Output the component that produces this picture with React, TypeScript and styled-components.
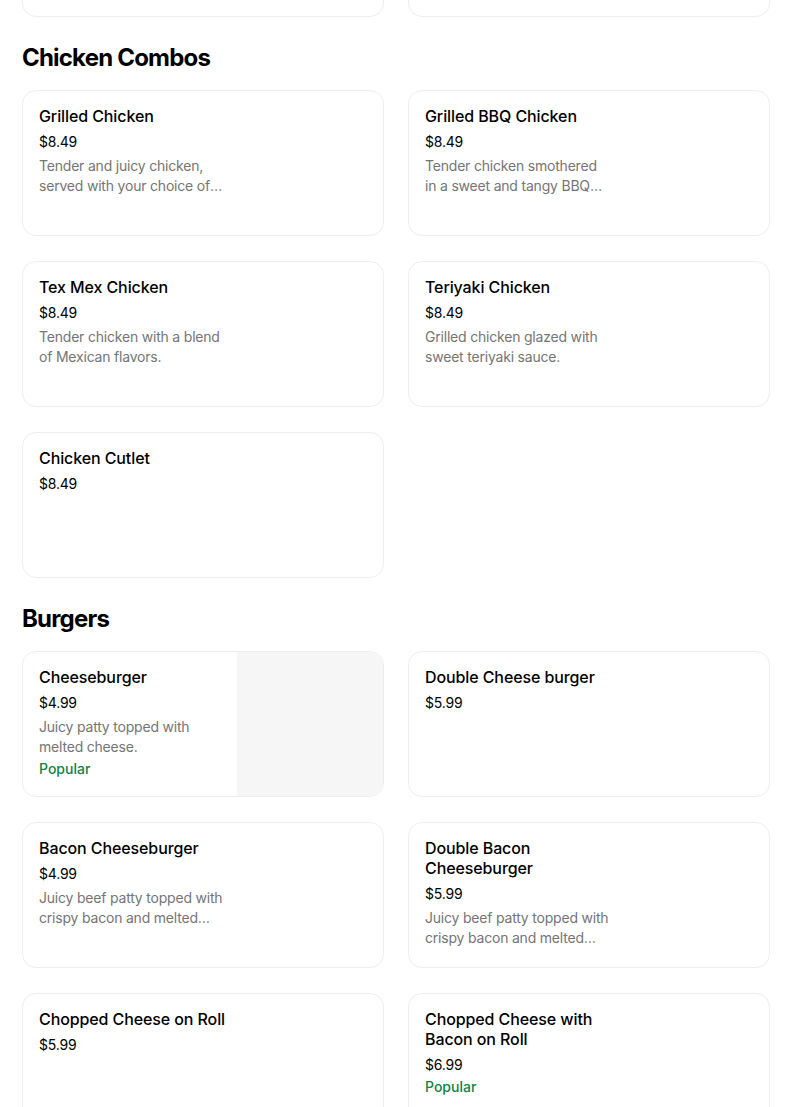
import React from "react";
import styled, { createGlobalStyle } from "styled-components";

const Global = createGlobalStyle`
  html, body { margin: 0; padding: 0; background: #fff; }
  body { font-family: Inter, "Noto Sans", sans-serif; color: #000; overflow: hidden; }
`;

const Page = styled.div`
  padding: 0 33px 0 22px;
  display: flex;
  flex-direction: column;
`;

const Grid = styled.div<{ $cut?: boolean }>`
  display: grid;
  grid-template-columns: 362px 362px;
  column-gap: 24px;
  row-gap: 25px;
  ${(p) => (p.$cut ? "margin-top: -129px;" : "")}
`;

const SectionTitle = styled.h2`
  margin: 25px 0 16px;
  font-family: Inter, "Noto Sans", sans-serif;
  font-weight: 700;
  font-size: 24px;
  line-height: 32px;
  letter-spacing: -0.8px;
  color: #000;
`;

const Card = styled.div`
  box-sizing: border-box;
  height: 146px;
  border: 1px solid #eeeeee;
  border-radius: 14px;
  display: flex;
  overflow: hidden;
  background: #fff;
`;

const Info = styled.div`
  flex: 1;
  padding: 15px 16px;
  min-width: 0;
  display: flex;
  flex-direction: column;
`;

const Name = styled.div`
  font-size: 16px;
  line-height: 20px;
  font-weight: 500;
  color: #000;
  max-width: 195px;
  letter-spacing: -0.1px;
`;

const Price = styled.div`
  margin-top: 6px;
  font-size: 14px;
  line-height: 20px;
  color: #000;
  letter-spacing: -0.2px;
`;

const Desc = styled.div`
  margin-top: 4px;
  font-size: 14px;
  line-height: 20px;
  color: #757575;
  max-width: 186px;
  letter-spacing: -0.2px;
  display: -webkit-box;
  -webkit-line-clamp: 2;
  -webkit-box-orient: vertical;
  overflow: hidden;
`;

const Tag = styled.div`
  margin-top: 2px;
  font-size: 14px;
  line-height: 20px;
  font-weight: 500;
  color: #0e8345;
`;

const Thumb = styled.div`
  width: 146px;
  flex: none;
  background: #f6f6f6;
`;

type Item = { name?: string; price?: string; desc?: string; popular?: boolean; image?: boolean };

const ItemCard = ({ item }: { item: Item }) => (
  <Card>
    <Info>
      {item.name && <Name>{item.name}</Name>}
      {item.price && <Price>{item.price}</Price>}
      {item.desc && <Desc>{item.desc}</Desc>}
      {item.popular && <Tag>Popular</Tag>}
    </Info>
    {item.image && <Thumb />}
  </Card>
);

const chicken: Item[] = [
  { name: "Grilled Chicken", price: "$8.49", desc: "Tender and juicy chicken, served with your choice of sides and sauce." },
  { name: "Grilled BBQ Chicken", price: "$8.49", desc: "Tender chicken smothered in a sweet and tangy BBQ sauce." },
  { name: "Tex Mex Chicken", price: "$8.49", desc: "Tender chicken with a blend of Mexican flavors." },
  { name: "Teriyaki Chicken", price: "$8.49", desc: "Grilled chicken glazed with sweet teriyaki sauce." },
  { name: "Chicken Cutlet", price: "$8.49" },
];

const burgers: Item[] = [
  { name: "Cheeseburger", price: "$4.99", desc: "Juicy patty topped with melted cheese.", popular: true, image: true },
  { name: "Double Cheese burger", price: "$5.99" },
  { name: "Bacon Cheeseburger", price: "$4.99", desc: "Juicy beef patty topped with crispy bacon and melted cheese." },
  { name: "Double Bacon Cheeseburger", price: "$5.99", desc: "Juicy beef patty topped with crispy bacon and melted cheese." },
  { name: "Chopped Cheese on Roll", price: "$5.99" },
  { name: "Chopped Cheese with Bacon on Roll", price: "$6.99", popular: true },
];

export default function App() {
  return (
    <>
      <Global />
      <Page>
        <Grid $cut>
          <Card />
          <Card />
        </Grid>
        <SectionTitle>Chicken Combos</SectionTitle>
        <Grid>
          {chicken.map((it) => (
            <ItemCard key={it.name} item={it} />
          ))}
        </Grid>
        <SectionTitle>Burgers</SectionTitle>
        <Grid>
          {burgers.map((it) => (
            <ItemCard key={it.name} item={it} />
          ))}
        </Grid>
      </Page>
    </>
  );
}
